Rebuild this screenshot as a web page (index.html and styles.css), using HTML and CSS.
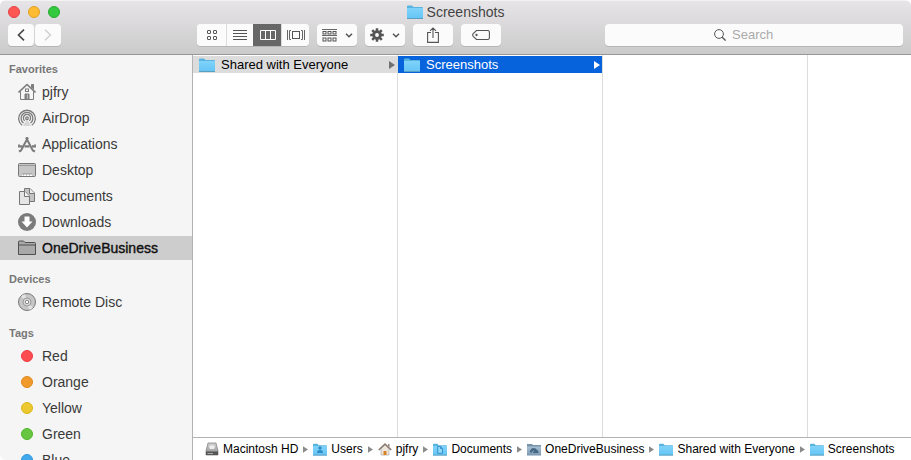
FILE: index.html
```html
<!DOCTYPE html>
<html lang="en">
<head>
<meta charset="utf-8">
<title>Screenshots</title>
<link rel="stylesheet" href="styles.css">
</head>
<body>
<svg class="defs" aria-hidden="true">
  <defs>
    <linearGradient id="blue" x1="0" y1="0" x2="0" y2="1"><stop offset="0" stop-color="#80d3fa"/><stop offset="1" stop-color="#66c5f5"/></linearGradient>
    <linearGradient id="steel" x1="0" y1="0" x2="0" y2="1"><stop offset="0" stop-color="#a9c0d3"/><stop offset="1" stop-color="#7d9ab5"/></linearGradient>
    <linearGradient id="metal" x1="0" y1="0" x2="0" y2="1"><stop offset="0" stop-color="#d4d4d4"/><stop offset="1" stop-color="#8b8b8b"/></linearGradient>
    <symbol id="folder" viewBox="0 0 16 14">
      <path d="M0 1.5Q0 .5 1 .5H5L6.5 2H15Q16 2 16 3V13.5H0Z" fill="#58b3df"/>
      <path d="M0 3H16V13H0Z" fill="url(#blue)"/>
      <path d="M0 13.5H16" stroke="#5a9fc0"/>
    </symbol>
    <symbol id="tri" viewBox="0 0 6 8"><path d="M0 0L6 4L0 8Z" fill="currentColor"/></symbol>
    <symbol id="chev" viewBox="0 0 8 5"><path d="M1 .8L4 3.8L7 .8" fill="none" stroke="#555" stroke-width="1.5"/></symbol>
  </defs>
</svg>
<div class="window">
  <header class="chrome">
    <div class="titlebar">
      <div class="lights">
        <button class="light close" aria-label="Close"></button>
        <button class="light minimize" aria-label="Minimize"></button>
        <button class="light zoom" aria-label="Zoom"></button>
      </div>
      <h1 class="title"><svg class="folder"><use href="#folder"/></svg>Screenshots</h1>
      <div></div>
    </div>
    <div class="toolbar">
      <div class="nav">
        <button class="btn" aria-label="Back"><svg width="8" height="12" viewBox="0 0 8 12"><path d="M7 .7L1.5 6L7 11.3" fill="none" stroke="#484848" stroke-width="1.6"/></svg></button>
        <button class="btn" aria-label="Forward" disabled><svg width="8" height="12" viewBox="0 0 8 12"><path d="M1 .7L6.5 6L1 11.3" fill="none" stroke="#cfcfcf" stroke-width="1.4"/></svg></button>
      </div>
      <div class="views">
        <button class="view" aria-label="Icons"><svg width="10" height="10" viewBox="0 0 10 10" fill="none" stroke="#555"><rect x=".5" y=".5" width="3" height="3" rx=".4"/><rect x="6.5" y=".5" width="3" height="3" rx=".4"/><rect x=".5" y="6.5" width="3" height="3" rx=".4"/><rect x="6.5" y="6.5" width="3" height="3" rx=".4"/></svg></button>
        <button class="view" aria-label="List"><svg width="14" height="10" viewBox="0 0 14 10"><path d="M0 .5H14M0 3.5H14M0 6.5H14M0 9.5H14" stroke="#555"/></svg></button>
        <button class="view on" aria-label="Columns"><svg width="16" height="10" viewBox="0 0 16 10" fill="none" stroke="#fff"><path d="M.5 .5H15.5V9.5H.5ZM5.5 .5V9.5M10.5 .5V9.5"/></svg></button>
        <button class="view" aria-label="Cover Flow"><svg width="18" height="10" viewBox="0 0 18 10" fill="none" stroke="#666"><path d="M.5 0V10M17.500 0V10M4 .5H2.500V9.500H4M14 .5H15.500V9.500H14"/><rect x="5.5" y="1.500" width="7" height="7" stroke="#555"/></svg></button>
      </div>
      <button class="btn tool" aria-label="Arrange"><svg width="15" height="13" viewBox="0 0 15 13" fill="none" stroke="#555"><path d="M0 .5H15M0 6.500H15" stroke-width=".9"/><rect x="1" y="2.500" width="3" height="2.500"/><rect x="6" y="2.500" width="3" height="2.500"/><rect x="11" y="2.500" width="3" height="2.500"/><rect x="1" y="9" width="3" height="3"/><rect x="6" y="9" width="3" height="3"/><rect x="11" y="9" width="3" height="3"/></svg><svg width="8" height="5"><use href="#chev"/></svg></button>
      <button class="btn tool" aria-label="Action"><svg width="14" height="14" viewBox="-7 -7 14 14"><g stroke="#555" stroke-width="2.500"><path d="M0-6.800V6.800M-6.800 0H6.800M-4.800-4.800L4.800 4.800M4.800-4.800L-4.800 4.800"/></g><circle r="4.800" fill="#555"/><circle r="1.900" fill="#fafafa"/></svg><svg width="8" height="5"><use href="#chev"/></svg></button>
      <button class="btn tool" aria-label="Share"><svg width="12" height="16" viewBox="0 0 12 16" fill="none" stroke="#555" stroke-width="1.1"><path d="M4 5.500H.6V15.400H11.400V5.500H8M6 11V1M3 3.800L6 .9L9 3.800"/></svg></button>
      <button class="btn tool" aria-label="Tags"><svg width="18" height="10" viewBox="0 0 18 10" fill="none" stroke="#555" stroke-width="1.1"><path d="M4.500 .5H15.500Q17.400 .5 17.400 2.300V7.700Q17.400 9.500 15.500 9.500H4.500L1.200 6.300Q.2 5 1.200 3.700Z"/><circle cx="4.500" cy="5" r=".6"/></svg></button>
      <label class="search">
        <svg width="12" height="12" viewBox="0 0 12 12" fill="none" stroke="#555"><circle cx="5" cy="5" r="4.400"/><path d="M8.200 8.200L11.600 11.600" stroke-width="1.300"/></svg>
        <input type="search" placeholder="Search" aria-label="Search">
      </label>
    </div>
  </header>
  <div class="main">
    <nav class="sidebar">
      <h2>Favorites</h2>
      <ul>
        <li><a href="#"><svg viewBox="0 0 18 18" fill="none" stroke="#7b7b7b"><path d="M.5 9.500L9 1.500L17.500 9.500" stroke-width="1.600"/><path d="M13.500 4.500V1.500H15.500V6.500" fill="#7b7b7b"/><path d="M2.500 8.500V16.500H15.500V8.500"/><rect x="7.500" y="6" width="3" height="2.500"/><path d="M7 16V11H11V16Z" fill="#888"/><path d="M9.500 11.500V16" stroke="#bbb"/></svg>pjfry</a></li>
        <li><a href="#"><svg viewBox="0 0 18 18" fill="none" stroke="#7b7b7b" stroke-width="1.300"><path d="M4.200 16.300A8.300 8.300 0 1 1 13.800 16.300"/><path d="M5.500 14A5.900 5.900 0 1 1 12.500 14"/><path d="M6.700 11.800A3.600 3.600 0 1 1 11.300 11.800"/><circle cx="9" cy="9.200" r="1.300"/><path d="M9 10L5 17H13Z" fill="#7b7b7b" stroke="none" opacity=".25"/></svg>AirDrop</a></li>
        <li><a href="#"><svg viewBox="0 0 18 18" fill="none" stroke="#7b7b7b" stroke-width="2"><path d="M8 2.500L14.800 15.500L17 16.500M10 2.500L3 15.500L1 16.500"/><path d="M0 11.300H4.500M6.500 11.300H11.500M14 11.300H18" stroke-width="2.200"/><path d="M1 9V11M17 9V11" stroke-width="1"/></svg>Applications</a></li>
        <li><a href="#"><svg viewBox="0 0 18 18"><rect x=".5" y="2.500" width="17" height="13" rx="1" fill="#c6c6c6" stroke="#777"/><path d="M1 4.500H17" stroke="#999"/><path d="M4 13H14V15H4Z" fill="#fff"/><path d="M4 13H14M5 14H6M8 14H9M11 14H12" stroke="#888" stroke-width=".8"/></svg>Desktop</a></li>
        <li><a href="#"><svg viewBox="0 0 18 18" stroke="#777"><path d="M6.500 1.500H12L16.500 6V14.500H6.500Z" fill="#c4c4c4"/><path d="M11.500 1.500V6.500H16.500" fill="#eee"/><path d="M1.500 4.500H7L11.500 9V17.500H1.500Z" fill="#e5e5e5"/><path d="M6.500 4.500V9.500H11.500" fill="#f5f5f5"/></svg>Documents</a></li>
        <li><a href="#"><svg viewBox="0 0 18 18"><circle cx="9" cy="9" r="9" fill="#7b7b7b"/><path d="M6.500 3.500H11.500V8.500H14.500L9 14.500L3.500 8.500H6.500Z" fill="#fff"/></svg>Downloads</a></li>
        <li><a href="#" class="selected" aria-current="page"><svg viewBox="0 0 18 18" fill="#a9a9a9" stroke="#505050"><path d="M.5 15.500V3Q.5 2 1.500 2H5.500L7 3.500H16.500Q17.500 3.500 17.500 4.500V15.500Z"/><path d="M1 6H17" /></svg>OneDriveBusiness</a></li>
      </ul>
      <h2>Devices</h2>
      <ul>
        <li><a href="#"><svg viewBox="0 0 18 18" fill="none"><circle cx="9" cy="9" r="8.500" fill="#c6c6c6" stroke="#777"/><path d="M9 9L3 3.500A8 8 0 0 1 7 1.300ZM9 9L15 14.500A8 8 0 0 1 11 16.700Z" fill="#e2e2e2"/><circle cx="9" cy="9" r="4" fill="#d9d9d9" stroke="#999"/><circle cx="9" cy="9" r="1.700" fill="#fff" stroke="#888"/></svg>Remote Disc</a></li>
      </ul>
      <h2>Tags</h2>
      <ul>
        <li><a href="#"><span class="dot red"></span>Red</a></li>
        <li><a href="#"><span class="dot orange"></span>Orange</a></li>
        <li><a href="#"><span class="dot yellow"></span>Yellow</a></li>
        <li><a href="#"><span class="dot green"></span>Green</a></li>
        <li><a href="#"><span class="dot blue"></span>Blue</a></li>
      </ul>
    </nav>
    <main class="content">
      <div class="columns">
        <div class="column"><a href="#" class="item parent"><svg class="folder"><use href="#folder"/></svg><span>Shared with Everyone</span><svg class="tri"><use href="#tri"/></svg></a></div>
        <div class="column"><a href="#" class="item active"><svg class="folder"><use href="#folder"/></svg><span>Screenshots</span><svg class="tri"><use href="#tri"/></svg></a></div>
        <div class="column"></div>
        <div class="column last"></div>
      </div>
      <footer class="path">
        <a href="#"><svg viewBox="0 0 14 14"><path d="M3 1H11L13 9V13H1V9Z" fill="url(#metal)" stroke="#777" stroke-width=".7"/><path d="M1 9.500H13V13H1Z" fill="#555"/><path d="M4 4.500Q7 2 10 4.500L9 7H5Z" fill="#eee"/><path d="M2.500 11.500H8" stroke="#aaa"/></svg>Macintosh HD</a>
        <svg class="sep"><use href="#tri"/></svg>
        <a href="#"><svg viewBox="0 0 14 14"><use href="#folder" width="14" height="13" y="1"/><circle cx="7" cy="6" r="1.700" fill="#318cc4"/><path d="M4 11Q4 8 7 8T10 11Z" fill="#318cc4"/></svg>Users</a>
        <svg class="sep"><use href="#tri"/></svg>
        <a href="#"><svg viewBox="0 0 14 14"><path d="M3 7V13H11V7L7 3Z" fill="#eee6dc" stroke="#aaa" stroke-width=".7"/><path d="M.7 8L7 2L13.300 8" fill="none" stroke="#8c7b70" stroke-width="1.600"/><path d="M10 2H11.500V5L10 4Z" fill="#998a80"/><path d="M5.500 9H8.500V13H5.500Z" fill="#d98227"/></svg>pjfry</a>
        <svg class="sep"><use href="#tri"/></svg>
        <a href="#"><svg viewBox="0 0 14 14"><use href="#folder" width="14" height="13" y="1"/><path d="M4.700 4.500H7.500L9.500 6.500V11.300H4.700ZM7.500 4.500V6.500H9.500" fill="#8fd8fb" stroke="#318cc4" stroke-width=".9"/></svg>Documents</a>
        <svg class="sep"><use href="#tri"/></svg>
        <a href="#"><svg viewBox="0 0 14 14"><path d="M0 2H5L6 3H14V13.500H0Z" fill="#7793ac"/><path d="M0 4.500H14V13H0Z" fill="url(#steel)"/><path d="M3.500 10.500Q2 8.500 4 7.800Q4.500 5.500 6.800 6.300Q9.500 5.700 9.800 8Q12.500 9 11 11H6Z" fill="#466887"/><path d="M5.500 11Q5 9.200 7 9" stroke="#abc0d2" stroke-width=".7" fill="none"/></svg>OneDriveBusiness</a>
        <svg class="sep"><use href="#tri"/></svg>
        <a href="#"><svg viewBox="0 0 14 14"><use href="#folder" width="14" height="13" y="1"/></svg>Shared with Everyone</a>
        <svg class="sep"><use href="#tri"/></svg>
        <a href="#"><svg viewBox="0 0 14 14"><use href="#folder" width="14" height="13" y="1"/></svg>Screenshots</a>
      </footer>
    </main>
  </div>
</div>
</body>
</html>
```
FILE: styles.css
```css
* { box-sizing: border-box; }
body {
  margin: 0;
  background: #fff;
  color: #000;
  font: 13px/16px "Liberation Sans", Arial, sans-serif;
}
h1, h2, ul { margin: 0; padding: 0; font-weight: normal; }
ul { list-style: none; }
a { color: inherit; text-decoration: none; }
button { margin: 0; padding: 0; border: 0; font: inherit; }
svg { display: block; flex: none; }
.defs { position: absolute; width: 0; height: 0; }

.window {
  display: flex;
  flex-direction: column;
  height: 100vh;
  overflow: hidden;
  border-radius: 6px 6px 6px 6px;
}

.chrome {
  flex: none;
  background: linear-gradient(#e6e4e6, #cccbcc);
  border-top: 1px solid #f4f3f4;
  border-bottom: 1px solid #979797;
  padding: 0 8px 8px;
}
.titlebar {
  display: grid;
  grid-template-columns: 1fr auto 1fr;
  align-items: center;
  height: 21px;
  margin-bottom: 2px;
}
.lights { display: flex; gap: 8px; }
.light { width: 12px; height: 12px; border-radius: 50%; }
.close { background: #fd5754; border: 1px solid #e04343; }
.minimize { background: #fdbc32; border: 1px solid #dfa023; }
.zoom { background: #34c93e; border: 1px solid #27aa30; }
.title {
  display: flex;
  align-items: center;
  gap: 4px;
  font-size: 14px;
  color: #444;
}
.folder { width: 16px; height: 14px; }

.toolbar { display: flex; gap: 8px; }
.nav { display: flex; gap: 1px; flex: 0 0 181px; }
.btn, .views, .search {
  height: 22px;
  background: #fbfbfb;
  border-radius: 4px;
  box-shadow: 0 1px 0 #b5b5b5;
}
.btn { display: flex; align-items: center; justify-content: center; }
.nav .btn { width: 26px; }
.tool { width: 40px; gap: 8px; }
.views { display: grid; grid-template-columns: 29px 27px 28px 28px; overflow: hidden; }
.view {
  display: flex;
  align-items: center;
  justify-content: center;
  background: #fbfbfb;
}
.view + .view { border-left: 1px solid #dcdcdc; }
.view.on { background: #676767; border-color: #676767; }
.search {
  display: flex;
  align-items: center;
  justify-content: center;
  gap: 6px;
  width: 298px;
  margin-left: auto;
}
.search input {
  width: 62px;
  padding: 0;
  border: 0;
  outline: 0;
  background: none;
  font: inherit;
  appearance: none;
}
.search input::placeholder { color: #aaa; opacity: 1; }

.main { display: flex; flex: 1; min-height: 0; }
.sidebar {
  flex: 0 0 193px;
  overflow: hidden;
  background: #f5f5f5;
  border-right: 1px solid #b2b2b2;
  padding-top: 6px;
}
.sidebar h2 {
  padding: 0 9px;
  margin-bottom: 3px;
  font-size: 11px;
  font-weight: bold;
  color: #777;
}
.sidebar ul { display: grid; gap: 2px; margin-bottom: 11px; }
.sidebar a {
  display: flex;
  align-items: center;
  gap: 6px;
  height: 24px;
  padding-left: 18px;
  font-size: 14px;
  color: #3a3a3a;
}
.sidebar a svg { width: 18px; height: 18px; }
.sidebar .selected {
  background: #cdcdcd;
  color: #111;
  -webkit-text-stroke: 0.4px #111;
}
.dot { width: 12px; height: 12px; margin: 0 3px; border-radius: 50%; }
.red { background: #fb4c50; border: 1px solid #ee3b40; }
.orange { background: #f09a2e; border: 1px solid #e08a1c; }
.yellow { background: #ebc92e; border: 1px solid #dcb91c; }
.green { background: #66c63f; border: 1px solid #52b52c; }
.blue { background: #41a9ec; border: 1px solid #2c97dd; }

.content { flex: 1; min-width: 0; display: flex; flex-direction: column; background: #fff; }
.columns { flex: 1; display: flex; min-height: 0; }
.column { flex: 0 0 205px; padding-top: 1px; border-right: 1px solid #dcdcdc; }
.last { flex: 1; border: 0; }
.item {
  display: flex;
  align-items: center;
  gap: 6px;
  height: 17px;
  padding: 0 2px 0 6px;
}
.item span { flex: 1; }
.parent { background: #dcdcdc; }
.active { background: #0763dc; color: #fff; }
.tri { width: 6px; height: 8px; color: #707070; }
.active .tri { color: #fff; }

.path {
  display: flex;
  align-items: center;
  flex: none;
  gap: 5px;
  height: 23px;
  padding-left: 12px;
  border-top: 1px solid #b2b2b2;
  font-size: 12px;
  white-space: nowrap;
}
.path a { display: flex; align-items: center; gap: 4px; }
.path a svg { width: 14px; height: 14px; }
.sep { width: 5px; height: 7px; color: #8b8b8b; }
```
